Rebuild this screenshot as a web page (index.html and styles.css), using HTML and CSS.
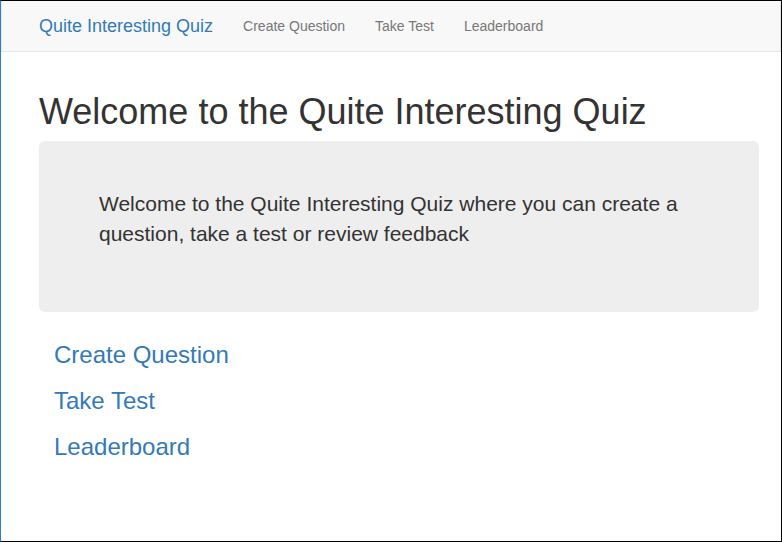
FILE: index.html
```html
<!DOCTYPE html>
<html>
<head>
<meta charset="utf-8">
<title>Quite Interesting Quiz</title>
<link rel="stylesheet" href="styles.css">
</head>
<body>
<div class="frame">
  <nav class="navbar">
    <a class="brand" href="#">Quite Interesting Quiz</a>
    <ul class="nav">
      <li><a href="#">Create Question</a></li>
      <li><a href="#">Take Test</a></li>
      <li><a href="#">Leaderboard</a></li>
    </ul>
  </nav>
  <main class="container">
    <h1 class="title">Welcome to the Quite Interesting Quiz</h1>
    <div class="jumbotron">
      <p>Welcome to the Quite Interesting Quiz where you can create a question, take a test or review feedback</p>
    </div>
    <div class="links">
      <h3><a href="#">Create Question</a></h3>
      <h3><a href="#">Take Test</a></h3>
      <h3><a href="#">Leaderboard</a></h3>
    </div>
  </main>
</div>
</body>
</html>
```
FILE: styles.css
```css
html, body {
  margin: 0;
  padding: 0;
  background: #fff;
}
body {
  font-family: "Liberation Sans", Arial, sans-serif;
  font-size: 14px;
  line-height: 1.42857;
  color: #333;
}
a { text-decoration: none; color: #337ab7; }
.frame {
  box-sizing: border-box;
  width: 782px;
  height: 542px;
  border: 1px solid #000;
  border-left-color: #2b7fd4;
  overflow: hidden;
}
.navbar {
  box-sizing: border-box;
  height: 51px;
  background: #f8f8f8;
  border: 1px solid #e7e7e7;
  border-top: none;
  display: flex;
  align-items: center;
  padding-left: 22px;
}
.brand {
  font-size: 18px;
  line-height: 20px;
  padding: 15px;
  color: #337ab7;
}
.nav {
  list-style: none;
  margin: 0;
  padding: 0;
  display: flex;
}
.nav a {
  display: block;
  padding: 15px;
  line-height: 20px;
  color: #777;
}
.container {
  width: 720px;
  padding: 20px 0 0 38px;
}
.title {
  font-size: 36px;
  font-weight: 500;
  line-height: 1.1;
  margin: 20px 0 9px;
}
.jumbotron {
  background: #eee;
  border-radius: 6px;
  padding: 48px 60px;
  margin-bottom: 30px;
}
.jumbotron p {
  font-size: 21px;
  line-height: 30px;
  margin: 0 0 15px;
}
.links {
  padding-left: 15px;
}
.links h3 {
  font-size: 24px;
  font-weight: 500;
  line-height: 1.1;
  margin: 20px 0 10px;
}
```
